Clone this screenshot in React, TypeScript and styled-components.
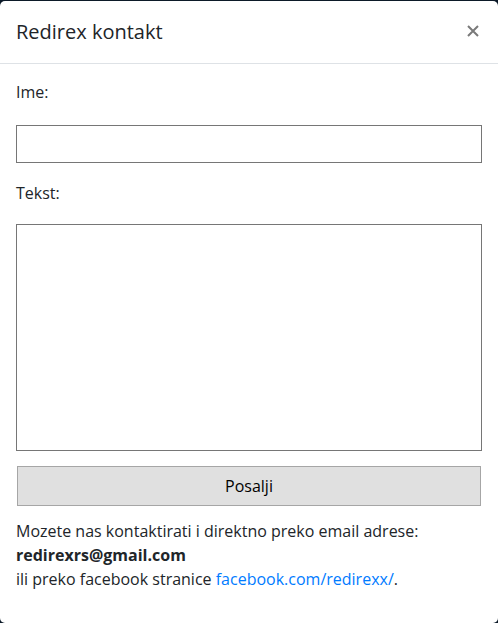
import React from "react";
import styled, { createGlobalStyle } from "styled-components";

const Global = createGlobalStyle`
  html, body {
    margin: 0;
    padding: 0;
    background: #0c1a28;
  }
  body {
    font-family: "Open Sans", "Noto Sans", Arial, sans-serif;
    color: #212529;
  }
  * { box-sizing: border-box; }
`;

const Modal = styled.div`
  margin-top: 1px;
  width: 498px;
  min-height: 622px;
  background: #fff;
  border-radius: 5px;
  display: flex;
  flex-direction: column;
`;

const Header = styled.div`
  display: flex;
  align-items: center;
  justify-content: space-between;
  height: 63px;
  padding: 0 16px;
  border-bottom: 1px solid #dee2e6;
`;

const Title = styled.h5`
  margin: 0;
  font-size: 20px;
  font-weight: 400;
  line-height: 30px;
  color: #212529;
`;

const Close = styled.button`
  border: 0;
  background: transparent;
  padding: 0;
  margin-right: 1px;
  margin-bottom: 2px;
  width: 16px;
  height: 16px;
  display: flex;
  align-items: center;
  justify-content: center;
  cursor: pointer;
`;

const Body = styled.div`
  padding: 16px 16px 32px;
  display: flex;
  flex-direction: column;
`;

const Label = styled.label<{ $gap: number }>`
  display: block;
  font-size: 16px;
  line-height: 24px;
  margin-bottom: ${(p) => p.$gap}px;
`;

const Input = styled.input`
  display: block;
  width: 100%;
  height: 38px;
  border: 1px solid #767676;
  border-radius: 0;
  margin: 0 0 18px;
  font: inherit;
  padding: 4px 6px;
`;

const TextArea = styled.textarea`
  display: block;
  width: 100%;
  height: 227px;
  border: 1px solid #767676;
  border-radius: 0;
  margin: 0 0 15px;
  font: inherit;
  resize: none;
  padding: 4px 6px;
`;

const Submit = styled.button`
  display: block;
  width: calc(100% - 2px);
  margin: 0 1px 13px;
  height: 40px;
  background: #e0e0e0;
  border: 1px solid #a6a6a6;
  border-radius: 0;
  font-family: "Open Sans", Arial, sans-serif;
  font-size: 16px;
  color: #000;
  padding: 0;
`;

const Info = styled.p`
  margin: 0;
  font-size: 16px;
  line-height: 24px;
`;

const Link = styled.a`
  color: #007bff;
  text-decoration: none;
`;

export default function App() {
  return (
    <>
      <Global />
      <Modal>
        <Header>
          <Title>Redirex kontakt</Title>
          <Close aria-label="Close">
            <svg width="12" height="12" viewBox="0 0 12 12">
              <path d="M1 1L11 11M11 1L1 11" stroke="#7a7a7a" strokeWidth="2" />
            </svg>
          </Close>
        </Header>
        <Body>
          <Label $gap={21}>Ime:</Label>
          <Input type="text" />
          <Label $gap={19}>Tekst:</Label>
          <TextArea />
          <Submit>Posalji</Submit>
          <Info>
            Mozete nas kontaktirati i direktno preko email adrese:
            <br />
            <b>redirexrs@gmail.com</b>
            <br />
            ili preko facebook stranice{" "}
            <Link href="#">facebook.com/redirexx/</Link>.
          </Info>
        </Body>
      </Modal>
    </>
  );
}
